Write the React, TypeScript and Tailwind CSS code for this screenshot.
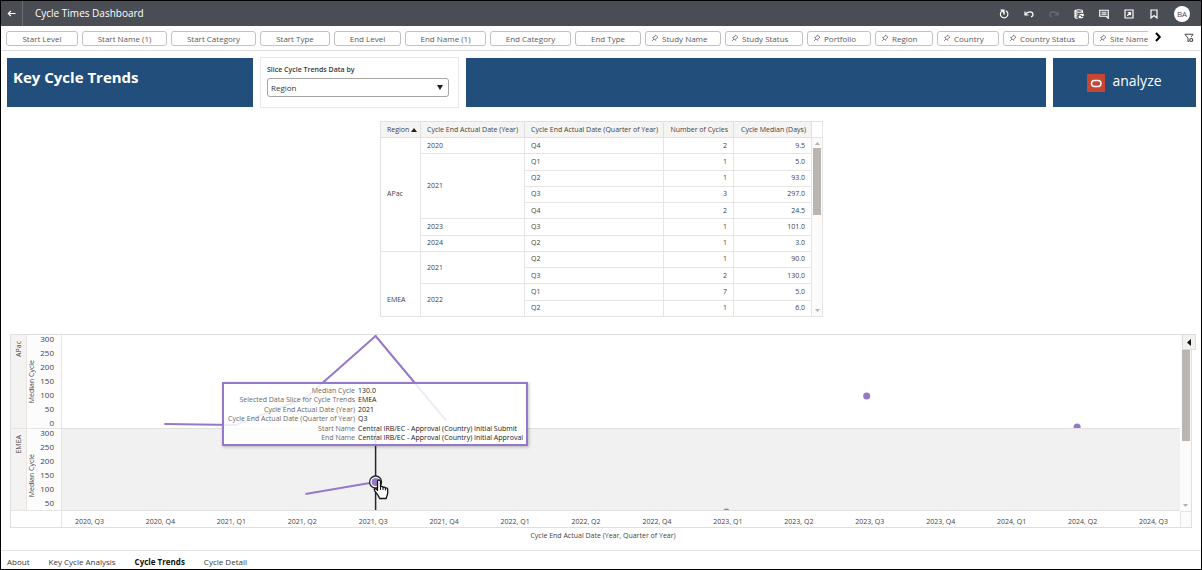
import React from "react";

type Filter = { label: string; width: string; pinned?: boolean };

const FILTERS: Filter[] = [
  { label: "Start Level", width: "w-[72px]" },
  { label: "Start Name (1)", width: "w-[85px]" },
  { label: "Start Category", width: "w-[85px]" },
  { label: "Start Type", width: "w-[70px]" },
  { label: "End Level", width: "w-[67px]" },
  { label: "End Name (1)", width: "w-[81px]" },
  { label: "End Category", width: "w-[81px]" },
  { label: "End Type", width: "w-[66px]" },
  { label: "Study Name", width: "w-[76px]", pinned: true },
  { label: "Study Status", width: "w-[78px]", pinned: true },
  { label: "Portfolio", width: "w-[64px]", pinned: true },
  { label: "Region", width: "w-[58px]", pinned: true },
  { label: "Country", width: "w-[62px]", pinned: true },
  { label: "Country Status", width: "w-[86px]", pinned: true },
  { label: "Site Name", width: "w-[76px]", pinned: true },
];

type Row = {
  region?: [string, number];
  year?: [string, number];
  quarter: string;
  count: number;
  median: string;
};

const ROWS: Row[] = [
  { region: ["APac", 7], year: ["2020", 1], quarter: "Q4", count: 2, median: "9.5" },
  { year: ["2021", 4], quarter: "Q1", count: 1, median: "5.0" },
  { quarter: "Q2", count: 1, median: "93.0" },
  { quarter: "Q3", count: 3, median: "297.0" },
  { quarter: "Q4", count: 2, median: "24.5" },
  { year: ["2023", 1], quarter: "Q3", count: 1, median: "101.0" },
  { year: ["2024", 1], quarter: "Q2", count: 1, median: "3.0" },
  { region: ["EMEA", 4], year: ["2021", 2], quarter: "Q2", count: 1, median: "90.0" },
  { quarter: "Q3", count: 2, median: "130.0" },
  { year: ["2022", 2], quarter: "Q1", count: 7, median: "5.0" },
  { quarter: "Q2", count: 1, median: "6.0" },
];

const QUARTERS = [
  "2020, Q3", "2020, Q4", "2021, Q1", "2021, Q2", "2021, Q3", "2021, Q4", "2022, Q1", "2022, Q2",
  "2022, Q4", "2023, Q1", "2023, Q2", "2023, Q3", "2023, Q4", "2024, Q1", "2024, Q2", "2024, Q3",
];

const TOOLTIP: [string, string][] = [
  ["Median Cycle", "130.0"],
  ["Selected Data Slice for Cycle Trends", "EMEA"],
  ["Cycle End Actual Date (Year)", "2021"],
  ["Cycle End Actual Date (Quarter of Year)", "Q3"],
  ["Start Name", "Central IRB/EC - Approval (Country) Initial Submit"],
  ["End Name", "Central IRB/EC - Approval (Country) Initial Approval"],
];

const TABS = ["About", "Key Cycle Analysis", "Cycle Trends", "Cycle Detail"];

/* Horizontal position of the n-th quarter, as a share of the plot width. */
const at = (n: number) => `${2.95 + n * 6.275}%`;

function Icon({ children, className = "size-[10px]" }: { children: React.ReactNode; className?: string }) {
  return (
    <svg viewBox="0 0 20 20" fill="none" stroke="currentColor" strokeWidth="2.4" className={className} aria-hidden="true">
      {children}
    </svg>
  );
}

function ToolButton({ label, disabled, children }: { label: string; disabled?: boolean; children: React.ReactNode }) {
  return (
    <button
      type="button"
      aria-label={label}
      disabled={disabled}
      className="flex size-[10px] items-center justify-center text-white disabled:text-[#6c6e74]"
    >
      <Icon>{children}</Icon>
    </button>
  );
}

function Header() {
  return (
    <header className="flex h-[25px] items-center bg-[#4b4d54] text-white">
      <button type="button" aria-label="Back" className="flex h-full w-[22px] items-center justify-center border-r border-[#6b6d73]">
        <Icon className="size-[9px]">
          <path d="M19 10H3M8.5 4.5 3 10l5.500 5.500" strokeWidth="2.600" />
        </Icon>
      </button>
      <h1 className="ml-3 flex-1 text-[10px]">Cycle Times Dashboard</h1>
      <div className="flex items-center gap-[15px] pr-[11px]">
        <ToolButton label="Refresh">
          <path d="M13.500 3.500a7.500 7.500 0 1 1-8 1M10 6v5.500" />
          <path d="M3 1.500h7.500V9z" fill="currentColor" strokeWidth="1" />
        </ToolButton>
        <ToolButton label="Undo">
          <path d="M2 5v7h7M2.500 11.500C7 4 17 4 18 10.500c.3 3-1.500 4.500-4 5" />
        </ToolButton>
        <ToolButton label="Redo" disabled>
          <path d="M18 5v7h-7M17.500 11.500C13 4 3 4 2 10.500c-.3 3 1.500 4.500 4 5" />
        </ToolButton>
        <ToolButton label="Refresh data">
          <ellipse cx="9.500" cy="4" rx="7.500" ry="2.500" />
          <path d="M2 4v12c0 1.500 3 2.300 5.500 2.500M17 4v4M2.500 8.500c1 1.500 3 2 6 2M2.500 12.500c1 1.200 2 1.500 4 1.800M18 12.500a4 4 0 0 0-7 .5M18.500 9.500v3.500H15M11 15.500a4 4 0 0 0 7 0M10.500 18.500v-3.300H14" />
        </ToolButton>
        <ToolButton label="Comments">
          <path d="M1.500 2.500h17v16l-4-4h-13zM5 6.500h10M5 10.300h10" />
        </ToolButton>
        <ToolButton label="Open in window">
          <path d="M2 2h16v16H2zM7.500 7h5.500v5.500M13 7l-6.500 6.500" />
        </ToolButton>
        <ToolButton label="Bookmark">
          <path d="M4 2h12v16L10 13l-6 5z" />
        </ToolButton>
        <button type="button" className="flex size-4 items-center justify-center rounded-full bg-white text-[8px] leading-4 text-[#4b4d54]">
          BA
        </button>
      </div>
    </header>
  );
}

function FilterBar() {
  return (
    <div className="flex h-[25px] items-center border-b border-[#dedede] pl-[5px]">
      <div className="flex min-w-0 flex-1 gap-1 overflow-hidden">
        {FILTERS.map((f) => (
          <button
            key={f.label}
            type="button"
            className={`${f.width} flex h-[15px] shrink-0 items-center rounded-[3px] border border-[#c4c2c0] text-[8px] leading-[13px] whitespace-nowrap text-[#5b5855] ${
              f.pinned ? "gap-[3px] pl-[5px]" : "justify-center"
            }`}
          >
            {f.pinned && (
              <Icon className="size-[8px]">
                <path d="M11.500 2.500 17.500 8.500 15 9.500 12 12.500 11.500 16 4 8.500 7.500 8 10.500 5zM7.500 12.500 2.500 17.500" strokeWidth="1.800" />
              </Icon>
            )}
            {f.label}
          </button>
        ))}
      </div>
      <button type="button" aria-label="More filters" className="ml-[4px] flex w-3 items-center justify-center pb-[3px] text-black">
        <Icon>
          <path d="m6 2 7.500 8L6 18" strokeWidth="4" />
        </Icon>
      </button>
      <button type="button" aria-label="Filter options" className="mr-[7px] ml-[20px] text-[#4a4744]">
        <Icon>
          <path d="M1.500 2.500h17M2 3l6 7v7.500l2.500-2M18 3l-4 5" strokeWidth="2" />
          <circle cx="14.500" cy="14" r="3" />
        </Icon>
      </button>
    </div>
  );
}

function Banners() {
  return (
    <section className="flex h-[51px] items-stretch gap-[7px]">
      <div className="my-px w-[246px] bg-[#214e7a] px-[6px] py-[9px]">
        <h2 className="text-[15px] leading-5 font-bold text-white">Key Cycle Trends</h2>
      </div>
      <div className="w-[199px] border border-[#e8e8e8] px-[6px] pt-[7px]">
        <label htmlFor="slice" className="block text-[7px] leading-[10px] font-semibold text-[#3a3734]">
          Slice Cycle Trends Data by
        </label>
        <div className="mt-[3px] grid w-[182px] items-center">
          <select
            id="slice"
            defaultValue="Region"
            className="col-start-1 row-start-1 h-[19px] w-full appearance-none rounded-[3px] border border-[#a8a5a2] bg-white px-[3px] text-[8px] text-[#3a3734]"
          >
            <option>Region</option>
          </select>
          <svg viewBox="0 0 6 5" className="pointer-events-none col-start-1 row-start-1 mr-[6px] h-[5px] w-[6px] justify-self-end" aria-hidden="true">
            <path d="M0 0h6L3 5z" fill="#201e1c" />
          </svg>
        </div>
      </div>
      <div className="my-px flex-1 bg-[#214e7a]" />
      <div className="my-px flex w-[143px] items-center justify-center gap-[7px] bg-[#214e7a]">
        <svg viewBox="0 0 18 18" className="size-[18px]" aria-hidden="true">
          <rect width="18" height="18" fill="#c74634" />
          <rect x="4.500" y="6.500" width="9.500" height="6" rx="3" fill="none" stroke="#fff" strokeWidth="1.400" />
        </svg>
        <span className="pb-[3px] text-[14px] leading-5 font-medium text-white">analyze</span>
      </div>
    </section>
  );
}

function CycleTable() {
  const head = "border-r border-b border-[#e2e1e0] pl-[6px] pr-[5px] font-normal whitespace-nowrap";
  const cell = "border-r border-b border-[#e6e5e4] px-[6px]";
  return (
    <section className="mx-auto mt-[13px] flex w-[443px] border-t border-l border-[#e2e1e0] text-[7px] leading-[10px] text-[#45423f]">
      <table className="h-[195px] w-[431px] table-fixed border-separate border-spacing-0">
        <colgroup>
          <col className="w-[40px]" />
          <col className="w-[104px]" />
          <col className="w-[139px]" />
          <col className="w-[70px]" />
          <col className="w-[78px]" />
        </colgroup>
        <thead>
          <tr className="h-4 bg-[#f5f4f2] text-left">
            <th className={head}>
              <span className="flex items-center gap-[2px]">
                Region
                <svg viewBox="0 0 6 4" className="h-1 w-[6px] shrink-0" aria-hidden="true">
                  <path d="M0 4h6L3 0z" fill="#201e1c" />
                </svg>
              </span>
            </th>
            <th className={head}>Cycle End Actual Date (Year)</th>
            <th className={head}>Cycle End Actual Date (Quarter of Year)</th>
            <th className={`${head} text-right`}>Number of Cycles</th>
            <th className={`${head} text-right`}>Cycle Median (Days)</th>
          </tr>
        </thead>
        <tbody>
          {ROWS.map((r, i) => (
            <tr key={i} className="h-4">
              {r.region && (
                <td rowSpan={r.region[1]} className={`${cell} ${r.region[0] === "EMEA" ? "pt-8" : ""}`}>
                  {r.region[0]}
                </td>
              )}
              {r.year && (
                <td rowSpan={r.year[1]} className={cell}>
                  {r.year[0]}
                </td>
              )}
              <td className={cell}>{r.quarter}</td>
              <td className={`${cell} text-right`}>{r.count}</td>
              <td className={`${cell} text-right`}>{r.median}</td>
            </tr>
          ))}
        </tbody>
      </table>
      <div className="flex w-[11px] flex-col items-center border-r border-b border-[#e6e5e4] bg-[#fbfbfb]">
        <div className="h-4 w-full border-b border-[#e2e1e0] bg-white" />
        <svg viewBox="0 0 5 3" className="mt-1 h-[3px] w-[5px]" aria-hidden="true">
          <path d="M0 3h5L2.500 0z" fill="#b5b1ad" />
        </svg>
        <div className="mt-[3px] h-[67px] w-2 bg-[#bbb5b1]" />
        <svg viewBox="0 0 5 3" className="mt-auto mb-1 h-[3px] w-[5px]" aria-hidden="true">
          <path d="M0 0h5L2.500 3z" fill="#b5b1ad" />
        </svg>
      </div>
    </section>
  );
}

function AxisPanel({ name, ticks }: { name: string; ticks: number[] }) {
  return (
    <>
      <div className="flex w-4 shrink-0 items-start justify-center border-r border-b border-[#e6e5e4] bg-[#f4f3f1] pt-[6px]">
        <span className="rotate-180 text-[7px] leading-[9px] [writing-mode:vertical-rl]">{name}</span>
      </div>
      <div className="flex w-[35px] shrink-0 items-start justify-between border-r border-b border-[#e6e5e4] bg-[#fcfcfc] pr-[7px]">
        <span className="mt-[25px] rotate-180 text-[7px] leading-[10px] whitespace-nowrap [writing-mode:vertical-rl]">
          Median Cycle
        </span>
        <div className="flex flex-col gap-[6px] text-right text-[8px] leading-2">
          {ticks.map((t) => (
            <span key={t}>{t}</span>
          ))}
        </div>
      </div>
    </>
  );
}

function Tooltip() {
  return (
    <dl
      role="tooltip"
      className="absolute top-[47px] left-[160px] grid h-[64px] w-[306px] grid-cols-[auto_auto] content-between gap-x-[3px] border-2 border-[#9678c8] bg-white/85 px-1 py-[2px] text-[7px] leading-[9px] whitespace-nowrap shadow-[1px_1px_3px_rgba(0,0,0,0.25)]"
    >
      {TOOLTIP.map(([k, v]) => (
        <React.Fragment key={k}>
          <dt className="text-right text-[#6b6865]">{k}</dt>
          <dd className="text-[#23211f]">{v}</dd>
        </React.Fragment>
      ))}
    </dl>
  );
}

function Pointer() {
  return (
    <svg
      viewBox="0 0 17 21"
      className="absolute top-[144px] left-[311px] h-[21px] w-[17px]"
      aria-hidden="true"
    >
      <path
        d="M4.500 2.500c0-2 3-2 3 0V8c.5-1 2.300-.8 2.500.5.7-.8 2.200-.5 2.400.7.900-.6 2.300-.2 2.300 1.300v3.500c0 2-1.200 3-1.500 5.500H6.500C6 16.500 3.500 14.500 1.500 11.500c-.8-1.500.8-2.300 2-1.200l1 1z"
        fill="#fff"
        stroke="#111"
        strokeWidth="1.300"
        strokeLinejoin="round"
      />
      <path d="M7.500 8v3M10 8.500V11M12.400 9.200v2.300" stroke="#111" />
    </svg>
  );
}

function TrendChart() {
  return (
    <section className="mt-[17px] ml-[3px] text-[#45423f]">
      <div className="relative mr-1 border border-[#e0dfde]">
        <div className="flex">
          <div className="min-w-0 flex-1">
            <div className="relative">
              <div className="flex h-[94px]">
                <AxisPanel name="APac" ticks={[300, 250, 200, 150, 100, 50, 0]} />
                <svg className="h-full min-w-0 flex-1 border-b border-[#e0dfde]" role="img" aria-label="APac median cycle">
                  <g stroke="#9678c8" strokeWidth="2" strokeLinecap="round">
                    <line x1={at(1)} y1="89" x2={at(2)} y2="90" />
                    <line x1={at(2)} y1="90" x2={at(3)} y2="63" />
                    <line x1={at(3)} y1="63" x2={at(4)} y2="1" />
                    <line x1={at(4)} y1="1" x2={at(5)} y2="85" />
                  </g>
                  <g fill="#9678c8">
                    <circle cx={at(11)} cy="61" r="3.500" />
                    <circle cx={at(14)} cy="92" r="3.500" />
                  </g>
                </svg>
              </div>
              <div className="flex h-[82px]">
                <AxisPanel name="EMEA" ticks={[300, 250, 200, 150, 100, 50]} />
                <svg className="h-full min-w-0 flex-1 border-b border-[#e0dfde] bg-[#f1f1f1]" role="img" aria-label="EMEA median cycle">
                  <line x1={at(4)} y1="0" x2={at(4)} y2="82" stroke="#262626" strokeWidth="1.500" />
                  <line x1={at(3)} y1="65" x2={at(4)} y2="53" stroke="#9678c8" strokeWidth="2" />
                  <circle cx={at(4)} cy="53" r="6" fill="#fff" stroke="#262626" strokeWidth="1.300" />
                  <circle cx={at(4)} cy="53" r="4" fill="#9678c8" />
                  <circle cx={at(9)} cy="83" r="3.500" fill="#9678c8" />
                </svg>
              </div>
              <div className="absolute inset-y-0 right-0 left-[51px]">
                <Tooltip />
                <Pointer />
              </div>
            </div>
            <div className="flex h-4">
              <div className="w-[51px] shrink-0 border-r border-[#e6e5e4]" />
              <ol className="-mr-[9px] -ml-2 flex min-w-0 flex-1 items-center pt-[5px] text-[7px] leading-[10px]">
                {QUARTERS.map((q) => (
                  <li key={q} className="flex-1 text-center whitespace-nowrap">
                    {q}
                  </li>
                ))}
              </ol>
            </div>
          </div>
          <div className="flex w-[11px] flex-col items-center bg-[#fbfbfb]">
            <div className="mt-[11px] h-[95px] w-2 bg-[#bbb5b1]" />
            <svg viewBox="0 0 5 3" className="mt-auto mb-1 h-[3px] w-[5px]" aria-hidden="true">
              <path d="M0 0h5L2.500 3z" fill="#b5b1ad" />
            </svg>
            <div className="h-4 w-full border-t border-l border-[#e6e5e4]" />
          </div>
        </div>
        <button
          type="button"
          aria-label="Expand legend"
          className="absolute -top-px -right-[5px] flex h-4 w-[14px] items-center justify-center border border-[#dedddc] bg-[#f1f1f0]"
        >
          <svg viewBox="0 0 4 7" className="h-[7px] w-1" aria-hidden="true">
            <path d="M4 0v7L0 3.500z" fill="#111" />
          </svg>
        </button>
      </div>
      <p className="mt-[3px] text-center text-[7px] leading-[10px]">Cycle End Actual Date (Year, Quarter of Year)</p>
    </section>
  );
}

function Tabs() {
  return (
    <nav className="mt-auto flex h-[19px] items-center gap-[19px] border-t border-[#e4e3e2] px-[6px] pt-[3px] text-[8px] leading-[10px] text-[#3a3734]">
      {TABS.map((t) => (
        <a key={t} href="#" className={t === "Cycle Trends" ? "font-bold text-[#111]" : ""}>
          {t}
        </a>
      ))}
    </nav>
  );
}

export default function App() {
  return (
    <div className="flex min-h-screen flex-col border border-black bg-white font-['Open_Sans',sans-serif]">
      <Header />
      <FilterBar />
      <main className="pt-[6px] pr-[5px] pl-[6px]">
        <Banners />
        <CycleTable />
        <TrendChart />
      </main>
      <Tabs />
    </div>
  );
}
